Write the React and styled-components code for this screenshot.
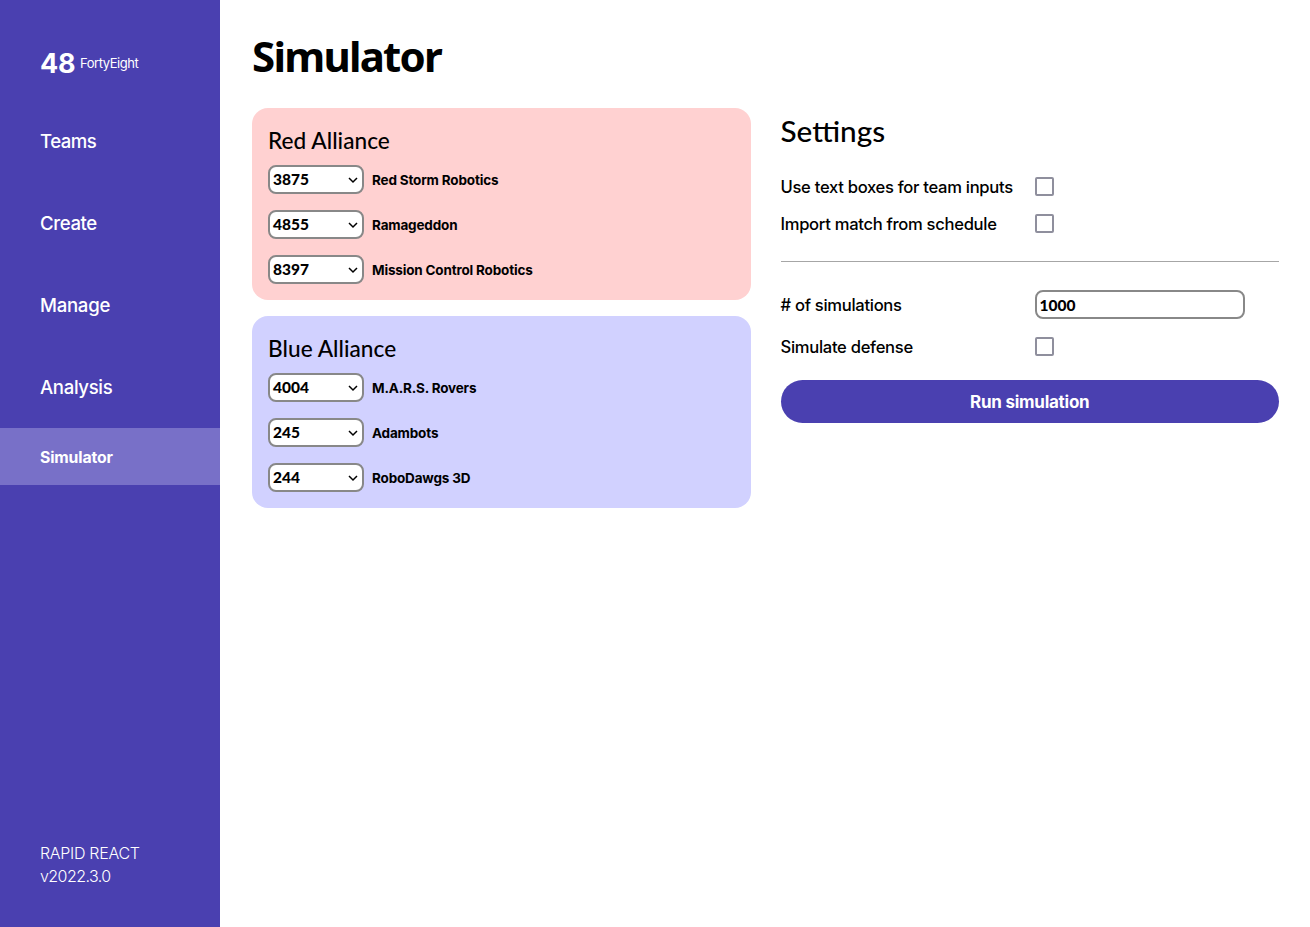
import React from 'react';
import styled, { createGlobalStyle } from 'styled-components';

const bodyFont = 'Inter, "Liberation Sans", sans-serif';
const titleFont = '"Noto Sans", "Open Sans", sans-serif';
const headingFont = 'Lato, "Noto Sans", sans-serif';
const numberFont = 'Lato, "Noto Sans", sans-serif';

const GlobalStyle = createGlobalStyle`
  *, *::before, *::after { box-sizing: border-box; }
  body {
    margin: 0;
    background: #fff;
    color: #000;
    font-family: ${bodyFont};
  }
`;

const Page = styled.div`
  display: flex;
  height: 100vh;
  min-height: 640px;
`;

const Sidebar = styled.nav`
  display: flex;
  flex-direction: column;
  flex: 0 0 220px;
  padding-bottom: 39px;
  background: #4a40b0;
  color: #fff;
`;

const Brand = styled.div`
  display: flex;
  align-items: center;
  height: 100px;
  padding: 26px 0 0 40px;
`;

const BrandMark = styled.span`
  width: 40px;
  padding-top: 1px;
  font: 700 27px/30px Inter, sans-serif;
  letter-spacing: -0.3px;
`;

const BrandName = styled.span`
  font-size: 13px;
  font-weight: 400;
  letter-spacing: -0.46px;
`;

const NavLink = styled.a`
  display: flex;
  align-items: center;
  height: 82px;
  padding-left: 40px;
  font-size: 18.6px;
  font-weight: 450;
  letter-spacing: ${({ $spacing }) => $spacing};
`;

const SubLink = styled.a`
  display: flex;
  align-items: center;
  height: 57px;
  padding: 2px 0 0 40px;
  background: #7870c8;
  font-size: 15.8px;
  font-weight: 700;
  letter-spacing: -0.15px;
`;

const Version = styled.footer`
  margin-top: auto;
  padding-left: 40px;
  font-size: 16px;
  font-weight: 350;
  line-height: 23px;
`;

const VersionLine = styled.div`
  letter-spacing: ${({ $spacing }) => $spacing};
`;

const Main = styled.main`
  flex: 1;
  padding: 28px 31px 0 32px;
`;

const Title = styled.h1`
  margin: 0;
  height: 80px;
  font: 700 42px/56px ${titleFont};
  letter-spacing: -1.75px;
`;

const Columns = styled.div`
  display: grid;
  grid-template-columns: 1fr 1fr;
  gap: 30px;
`;

const Alliances = styled.div`
  display: grid;
  gap: 16px;
`;

const Alliance = styled.section`
  display: grid;
  row-gap: 16px;
  padding: 16px;
  border-radius: 16px;
  background: ${({ $color }) => $color};
`;

const AllianceTitle = styled.h2`
  margin: 0 0 -8px;
  height: 33px;
  font: 500 22.6px/34px ${headingFont};
  letter-spacing: 0.05px;
`;

const TeamRow = styled.div`
  display: flex;
  align-items: center;
  gap: 8px;
  height: 29px;
`;

const Picker = styled.button`
  display: flex;
  align-items: center;
  justify-content: space-between;
  width: 96px;
  height: 29px;
  padding: 0 4px 0 3px;
  border: 2px solid #888;
  border-radius: 8px;
  background: #fff;
  color: #000;
  font: 900 15.5px/25px ${numberFont};
`;

const TeamName = styled.span`
  font-size: 13.5px;
  font-weight: 700;
  line-height: 29px;
  letter-spacing: -0.17px;
  padding-top: 1px;
`;

const Settings = styled.section`
  display: flex;
  flex-direction: column;
`;

const SettingsTitle = styled.h2`
  margin: 0 0 15px;
  font: 500 29.7px/45px ${headingFont};
`;

const Field = styled.label`
  display: grid;
  grid-template-columns: 254px 210px;
  align-items: center;
  height: ${({ $height }) => $height}px;
  font-size: 16.6px;
  font-weight: 450;
  letter-spacing: -0.3px;
`;

const Checkbox = styled.input.attrs({ type: 'checkbox' })`
  appearance: none;
  width: 19px;
  height: 19px;
  margin: 0;
  border: 2px solid #8f8f9d;
  border-radius: 2px;
  background: #fff;
`;

const TextInput = styled.input`
  width: 210px;
  height: 29px;
  padding: 0 3px;
  border: 2px solid #888;
  border-radius: 8px;
  font: 900 15.5px/25px ${numberFont};
`;

const Divider = styled.hr`
  width: 100%;
  height: 1px;
  margin: 19px 0 21px;
  border: 0;
  background: #a6a6a6;
`;

const RunButton = styled.button`
  height: 43px;
  margin-top: 13px;
  border: 0;
  border-radius: 22px;
  background: #4a40b0;
  color: #fff;
  font: 700 17px/43px ${bodyFont};
  letter-spacing: -0.25px;
`;

const Chevron = () => (
  <svg width="10" height="8" viewBox="0 0 10 8" fill="none" stroke="#000" strokeWidth="1.5">
    <path d="M1 2 L5 6 L9 2" />
  </svg>
);

const links = [
  { label: 'Teams', spacing: '-0.5px' },
  { label: 'Create', spacing: '-0.4px' },
  { label: 'Manage', spacing: '-0.28px' },
  { label: 'Analysis', spacing: '-0.35px' },
];

const alliances = [
  {
    name: 'Red Alliance',
    color: '#ffd1d1',
    teams: [['3875', 'Red Storm Robotics'], ['4855', 'Ramageddon'], ['8397', 'Mission Control Robotics']],
  },
  {
    name: 'Blue Alliance',
    color: '#d1d1ff',
    teams: [['4004', 'M.A.R.S. Rovers'], ['245', 'Adambots'], ['244', 'RoboDawgs 3D']],
  },
];

export default function App() {
  return (
    <Page>
      <GlobalStyle />
      <Sidebar>
        <Brand>
          <BrandMark>48</BrandMark>
          <BrandName>FortyEight</BrandName>
        </Brand>
        {links.map((link) => (
          <NavLink key={link.label} $spacing={link.spacing}>{link.label}</NavLink>
        ))}
        <SubLink>Simulator</SubLink>
        <Version>
          <VersionLine $spacing="-0.3px">RAPID REACT</VersionLine>
          <VersionLine $spacing="-0.55px">v2022.3.0</VersionLine>
        </Version>
      </Sidebar>
      <Main>
        <Title>Simulator</Title>
        <Columns>
          <Alliances>
            {alliances.map((alliance) => (
              <Alliance key={alliance.name} $color={alliance.color}>
                <AllianceTitle>{alliance.name}</AllianceTitle>
                {alliance.teams.map(([number, name]) => (
                  <TeamRow key={number}>
                    <Picker>{number}<Chevron /></Picker>
                    <TeamName>{name}</TeamName>
                  </TeamRow>
                ))}
              </Alliance>
            ))}
          </Alliances>
          <Settings>
            <SettingsTitle>Settings</SettingsTitle>
            <Field $height={37}>Use text boxes for team inputs<Checkbox /></Field>
            <Field $height={37}>Import match from schedule<Checkbox /></Field>
            <Divider />
            <Field $height={43}># of simulations<TextInput defaultValue="1000" /></Field>
            <Field $height={41}>Simulate defense<Checkbox /></Field>
            <RunButton>Run simulation</RunButton>
          </Settings>
        </Columns>
      </Main>
    </Page>
  );
}
